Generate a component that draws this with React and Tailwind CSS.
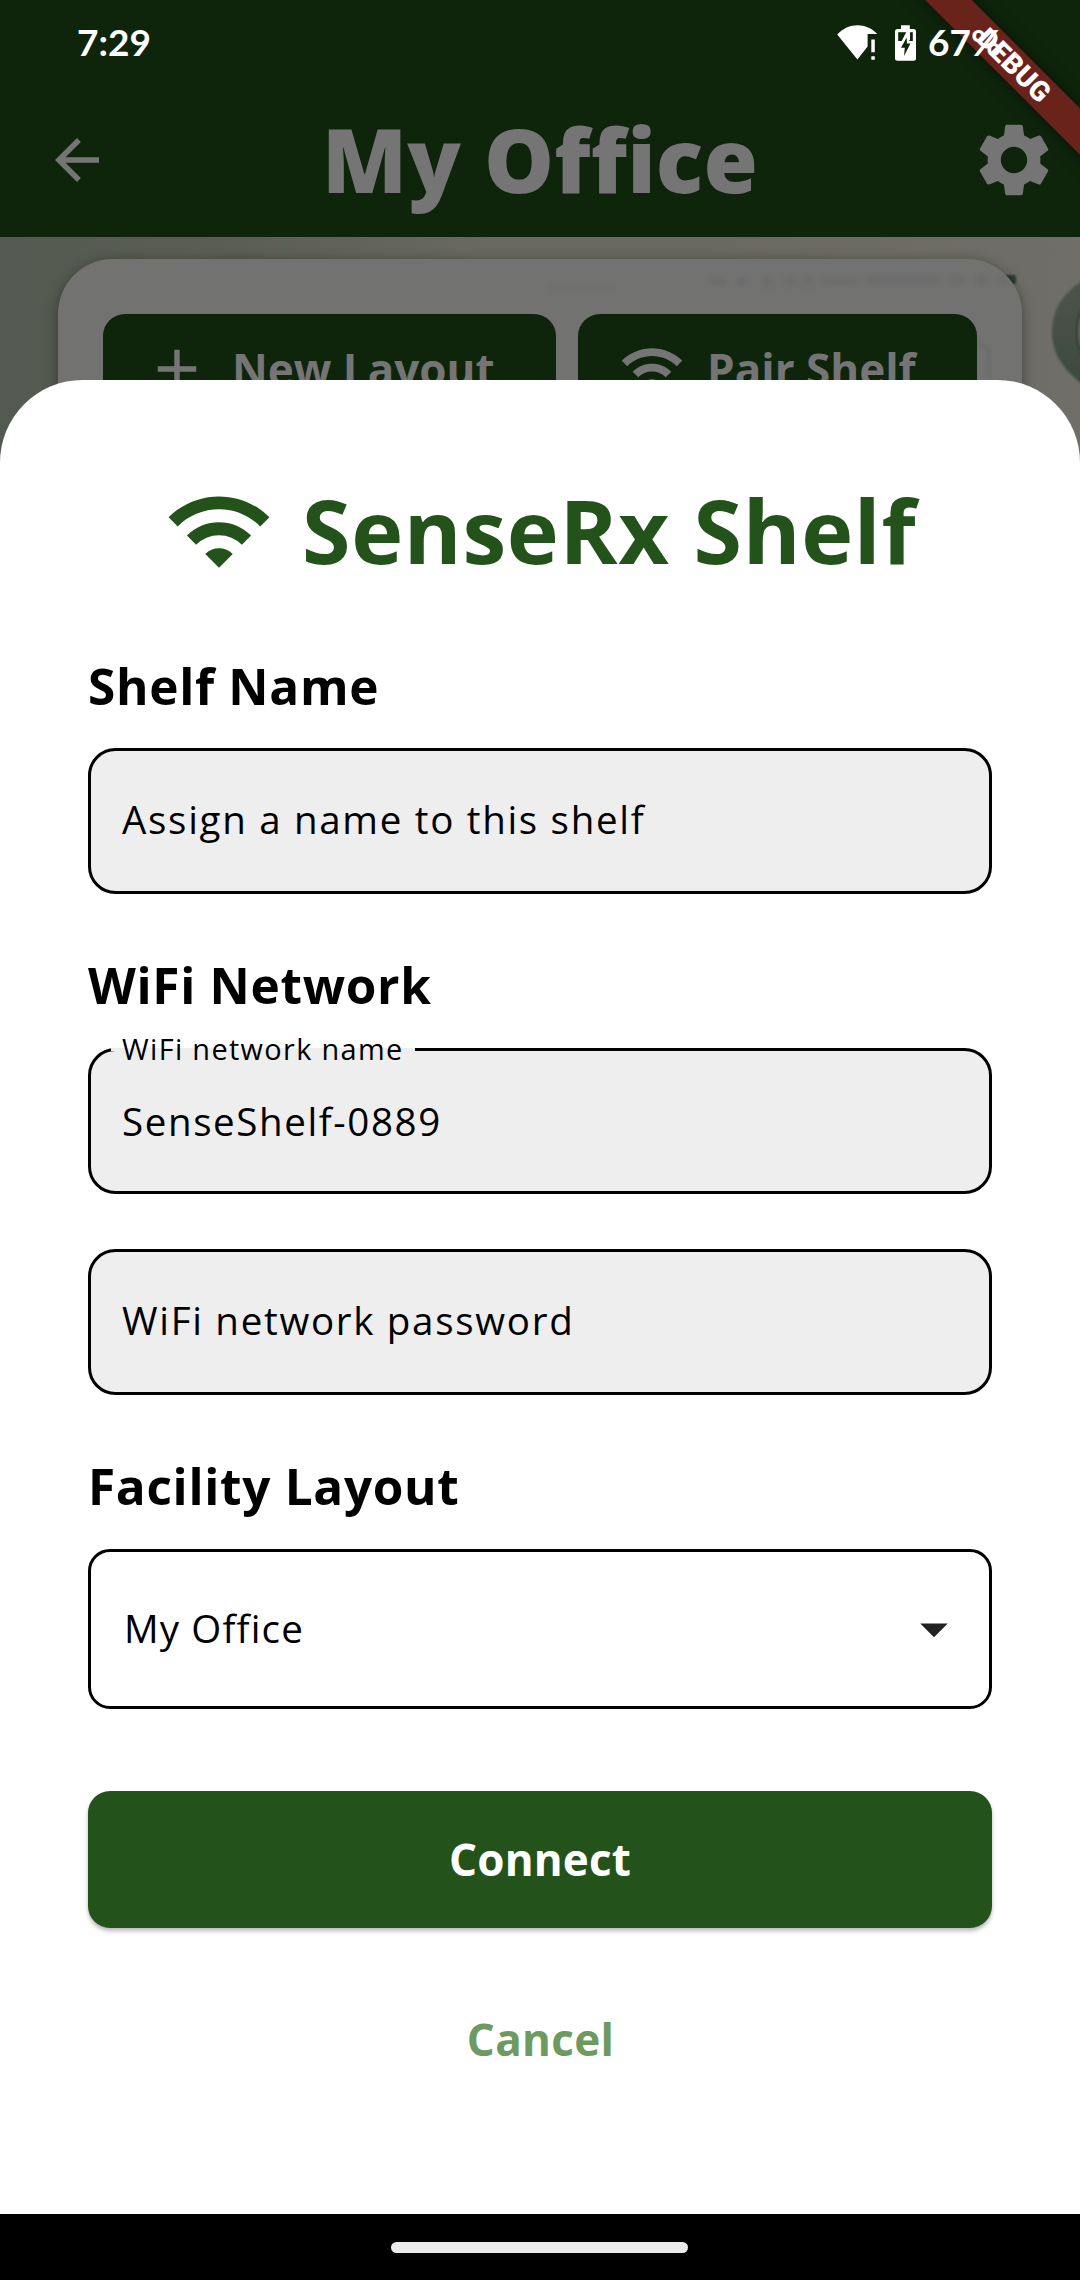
import React from "react";
import { MdAdd, MdArrowBack, MdArrowDropDown, MdSettings, MdWifi } from "react-icons/md";

function SignalIcon() {
  return (
    <svg className="h-[36px] w-[40px]" viewBox="837 25 40 36" fill="#fff">
      <path d="M837.2 34.6C848 22.2 866.500 22.200 877.200 33.900H867.600V46.600L857.400 59.600Z" />
      <path d="M871.300 39.600H874.800V52.300H871.300ZM871.300 56.200H874.800V59.700H871.300Z" />
    </svg>
  );
}

function BatteryIcon() {
  return (
    <svg className="h-[36px] w-[21px]" viewBox="895 25 21 36">
      <path d="M901 25.300h8.800v3.700h3.700a2.500 2.500 0 0 1 2.500 2.500v26.700a2.500 2.500 0 0 1-2.500 2.500h-16a2.500 2.500 0 0 1-2.500-2.500V31.500a2.500 2.500 0 0 1 2.500-2.500H901Z" fill="#fff" />
      <path d="M898.200 32.200H912.800V41H898.200Z" fill="#0e250c" />
      <path d="M908.500 31 900 47.700H905V56.500L911.200 43.500H907.800V31Z" fill="#0e250c" stroke="#fff" strokeWidth="3" />
      <path d="M906.800 37.500 901 47.700H904.800L904 56 910.500 43.500H906.800Z" fill="#0e250c" />
      <path d="M909.300 31.700V40" stroke="#fff" strokeWidth="1.500" />
    </svg>
  );
}

function StatusBar() {
  return (
    <div className="relative z-30 flex h-[83px] items-center pl-[77px] font-['Lato',sans-serif] text-[37px] leading-none font-bold text-white">
      <span className="flex-1">7:29</span>
      <div className="flex w-[243px] items-center">
        <span className="flex pt-[3px]">
          <SignalIcon />
        </span>
        <span className="ml-[18px] flex pt-[3px]">
          <BatteryIcon />
        </span>
        <span className="ml-[12px]">67%</span>
      </div>
    </div>
  );
}

function DebugBanner() {
  return (
    <div className="absolute top-0 right-0 z-20 size-[220px] overflow-hidden">
      <div className="absolute top-[49px] -left-[46px] flex h-[33px] w-[400px] rotate-45 items-center justify-center bg-[#6a231b] font-['Roboto',sans-serif] text-[28px] leading-none font-black tracking-[0.3px] text-white shadow-[0_0_16px_rgba(0,0,0,0.5)]">
        DEBUG
      </div>
    </div>
  );
}

function AppHeader() {
  return (
    <header className="flex h-[154px] items-center pr-[22px] pl-[44px] text-[#757575]">
      <MdArrowBack className="size-[66px]" />
      <h1 className="relative -top-px flex-1 text-center text-[88px] leading-[120px] font-extrabold tracking-[0.1px]">
        My Office
      </h1>
      <MdSettings className="size-[88px]" />
    </header>
  );
}

function WallPhoto() {
  return (
    <svg className="absolute inset-0 size-full" viewBox="0 237 1080 260" preserveAspectRatio="none">
      <defs>
        <linearGradient id="wall">
          <stop offset="0" stopColor="#545a51" />
          <stop offset="0.220" stopColor="#5b5e54" />
          <stop offset="0.450" stopColor="#69695f" />
          <stop offset="0.650" stopColor="#6a695f" />
          <stop offset="1" stopColor="#706e69" />
        </linearGradient>
        <linearGradient id="knob" x1="0" y1="0" x2="0" y2="1">
          <stop offset="0" stopColor="#4c544c" />
          <stop offset="0.500" stopColor="#464f46" />
          <stop offset="1" stopColor="#394a3f" />
        </linearGradient>
        <filter id="soft">
          <feGaussianBlur stdDeviation="1.200" />
        </filter>
      </defs>
      <rect y="237" width="1080" height="260" fill="url(#wall)" />
      <path d="M1090 276C1068 288 1052 305 1052 332C1052 358 1068 374 1090 390Z" fill="url(#knob)" filter="url(#soft)" />
      <path d="M1085 306C1074 318 1074 346 1085 356Z" fill="#5a625a" stroke="#2e3a33" strokeWidth="2" filter="url(#soft)" />
      <rect x="1002" y="275" width="14" height="9" rx="2" fill="#2a3a33" filter="url(#soft)" />
    </svg>
  );
}

function CardTexture() {
  return (
    <svg className="absolute inset-0 size-full" viewBox="58 259 964 240" preserveAspectRatio="none">
      <filter id="faint" x="-20%" y="-100%" width="140%" height="400%">
        <feGaussianBlur stdDeviation="2" />
      </filter>
      <g fill="#68696a" filter="url(#faint)" opacity="0.650">
        <rect x="710" y="279" width="16" height="6" />
        <rect x="737" y="278" width="9" height="8" />
        <rect x="763" y="278" width="8" height="8" />
        <rect x="786" y="279" width="9" height="6" />
        <rect x="805" y="277" width="7" height="9" />
        <rect x="822" y="279" width="36" height="4" />
        <rect x="867" y="277" width="72" height="6" />
        <rect x="950" y="278" width="16" height="4" />
        <rect x="976" y="276" width="10" height="8" />
        <rect x="1000" y="278" width="8" height="5" />
        <rect x="549" y="286" width="64" height="6" opacity="0.350" />
      </g>
      <path d="M978 345Q989 345 989 356V400" fill="none" stroke="#696a69" strokeWidth="3" filter="url(#faint)" />
    </svg>
  );
}

function LayoutCard() {
  return (
    <section className="relative mx-[58px] mt-[22px] h-[240px] overflow-hidden rounded-[55px] bg-[#727271] text-[44px] leading-[60px] font-bold text-[#757575]">
      <CardTexture />
      <div className="relative flex gap-[22px] pt-[55px] pl-[45px]">
        <button className="flex h-[110px] w-[453px] items-center rounded-[22px] bg-[#0e250c] pl-[41px]">
          <MdAdd className="size-[66px]" />
          <span className="ml-[22px]">New Layout</span>
        </button>
        <button className="flex h-[110px] w-[399px] items-center rounded-[22px] bg-[#0e250c] pl-[41px]">
          <MdWifi className="size-[66px]" />
          <span className="ml-[22px]">Pair Shelf</span>
        </button>
      </div>
    </section>
  );
}

function FieldLabel({ children }) {
  return <h3 className="text-[49.5px] leading-[68px] font-bold tracking-[0.7px] text-black">{children}</h3>;
}

function Field({ label, children }) {
  return (
    <div className="relative flex h-[146px] items-center rounded-[27.5px] border-[3px] border-black bg-[#eeeeee] pl-[31px] text-[38.5px] leading-[52px] tracking-[1.7px] text-black">
      <span className={label ? "tracking-[1.6px]" : "pb-[4px]"}>{children}</span>
      {label && (
        <span className="absolute -top-[3px] left-[20px] h-[3px] w-[304px] bg-[#eeeeee]">
          <span className="absolute -top-[19px] left-[11px] text-[28.875px] leading-[40px] tracking-[1.35px] whitespace-nowrap">
            {label}
          </span>
        </span>
      )}
    </div>
  );
}

function PairSheet() {
  return (
    <div className="absolute inset-x-0 top-[380px] bottom-[66px] z-10 flex flex-col rounded-t-[82.5px] bg-white px-[88px] pt-[90px]">
      <div className="flex h-[120px] items-center pl-[76px] text-[#24521b]">
        <MdWifi className="mt-[2px] size-[110px]" />
        <h2 className="ml-[28px] text-[88px] leading-[120px] font-bold tracking-[0.7px] whitespace-nowrap">
          SenseRx Shelf
        </h2>
      </div>
      <div className="mt-[62px]">
        <FieldLabel>Shelf Name</FieldLabel>
      </div>
      <div className="mt-[28px]">
        <Field>Assign a name to this shelf</Field>
      </div>
      <div className="mt-[57px]">
        <FieldLabel>WiFi Network</FieldLabel>
      </div>
      <div className="mt-[29px] flex flex-col gap-[55px]">
        <Field label="WiFi network name">SenseShelf-0889</Field>
        <Field>WiFi network password</Field>
      </div>
      <div className="mt-[57px]">
        <FieldLabel>Facility Layout</FieldLabel>
      </div>
      <div className="mt-[29px] flex h-[160px] items-center justify-between rounded-[22px] border-[3px] border-black pr-[22px] pl-[33px] text-[38.500px] leading-[52px] tracking-[1.15px] text-black">
        <span className="pb-[3px]">My Office</span>
        <MdArrowDropDown className="size-[66px] text-[#222222]" />
      </div>
      <button className="mt-[82px] h-[137px] rounded-[22px] bg-[#24521b] pb-[2px] text-[44px] leading-[60px] font-bold tracking-[0.15px] text-white shadow-[0_3px_4px_rgba(0,0,0,0.28)]">
        Connect
      </button>
      <button className="mt-[81px] h-[60px] pl-px text-[44px] leading-[60px] font-bold tracking-[0.3px] text-[#6c9a61]">
        Cancel
      </button>
    </div>
  );
}

export default function App() {
  return (
    <div className="relative flex h-[2280px] w-[1080px] flex-col overflow-hidden bg-[#0e250c] font-['Open_Sans','Noto_Sans',sans-serif]">
      <StatusBar />
      <AppHeader />
      <main className="relative h-[260px]">
        <WallPhoto />
        <div className="absolute inset-x-[58px] top-[22px] bottom-0 rounded-t-[55px] shadow-[0_3px_14px_rgba(0,0,0,0.4)]" />
        <LayoutCard />
      </main>
      <PairSheet />
      <DebugBanner />
      <footer className="mt-auto flex h-[66px] items-center justify-center bg-black pr-[2px]">
        <div className="h-[11px] w-[297px] rounded-full bg-[#ebebeb]" />
      </footer>
    </div>
  );
}
